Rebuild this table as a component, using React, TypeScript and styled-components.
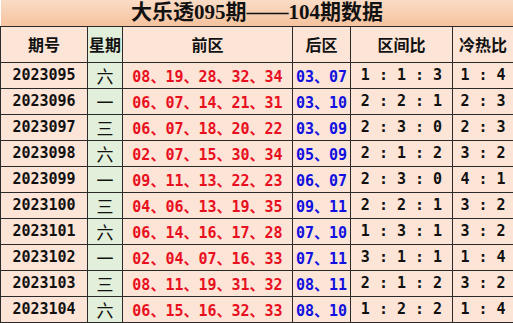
import styled, { createGlobalStyle } from 'styled-components';

const GlobalStyle = createGlobalStyle`
    html, body {
        margin: 0;
        padding: 0;
        background: #ffffff;
    }
`;

type Row = {
    issue: string;
    day: string;
    front: string[];
    back: string[];
    zone: number[];
    heat: number[];
};

const rows: Row[] = [
    { issue: '2023095', day: '六', front: ['08', '19', '28', '32', '34'], back: ['03', '07'], zone: [1, 1, 3], heat: [1, 4] },
    { issue: '2023096', day: '一', front: ['06', '07', '14', '21', '31'], back: ['03', '10'], zone: [2, 2, 1], heat: [2, 3] },
    { issue: '2023097', day: '三', front: ['06', '07', '18', '20', '22'], back: ['03', '09'], zone: [2, 3, 0], heat: [2, 3] },
    { issue: '2023098', day: '六', front: ['02', '07', '15', '30', '34'], back: ['05', '09'], zone: [2, 1, 2], heat: [3, 2] },
    { issue: '2023099', day: '一', front: ['09', '11', '13', '22', '23'], back: ['06', '07'], zone: [2, 3, 0], heat: [4, 1] },
    { issue: '2023100', day: '三', front: ['04', '06', '13', '19', '35'], back: ['09', '11'], zone: [2, 2, 1], heat: [3, 2] },
    { issue: '2023101', day: '六', front: ['06', '14', '16', '17', '28'], back: ['07', '10'], zone: [1, 3, 1], heat: [3, 2] },
    { issue: '2023102', day: '一', front: ['02', '04', '07', '16', '33'], back: ['07', '11'], zone: [3, 1, 1], heat: [1, 4] },
    { issue: '2023103', day: '三', front: ['08', '11', '19', '31', '32'], back: ['08', '11'], zone: [2, 1, 2], heat: [3, 2] },
    { issue: '2023104', day: '六', front: ['06', '15', '16', '32', '33'], back: ['08', '10'], zone: [1, 2, 2], heat: [1, 4] }
];

const colWidths = [87, 35, 170, 58, 102, 61];

const App = (): JSX.Element => {
    return (
        <>
            <GlobalStyle />
            <Sheet>
                <colgroup>
                    {colWidths.map((w, i) => (
                        <col key={i} style={{ width: w }} />
                    ))}
                </colgroup>
                <thead>
                    <TitleRow>
                        <TitleCell colSpan={6}>大乐透095期——104期数据</TitleCell>
                    </TitleRow>
                    <HeadRow>
                        <HeadCell>期号</HeadCell>
                        <HeadCell $green>星期</HeadCell>
                        <HeadCell>前区</HeadCell>
                        <HeadCell>后区</HeadCell>
                        <HeadCell>区间比</HeadCell>
                        <HeadCell>冷热比</HeadCell>
                    </HeadRow>
                </thead>
                <tbody>
                    {rows.map((r) => (
                        <DataRow key={r.issue}>
                            <NumCell>{r.issue}</NumCell>
                            <DayCell>{r.day}</DayCell>
                            <NumCell $color="#e8101e">{r.front.join('、')}</NumCell>
                            <NumCell $color="#1010e0">{r.back.join('、')}</NumCell>
                            <NumCell>{r.zone.join(' : ')}</NumCell>
                            <NumCell>{r.heat.join(' : ')}</NumCell>
                        </DataRow>
                    ))}
                </tbody>
            </Sheet>
        </>
    );
};

export default App;

const Sheet = styled.table`
    width: 513px;
    table-layout: fixed;
    border-collapse: collapse;
    border-spacing: 0;
`;

const TitleRow = styled.tr`
    height: 26px;
`;

const TitleCell = styled.th`
    padding: 0;
    border-bottom: 1px solid #2a2a2a;
    background: linear-gradient(to bottom, #fadcc6, #f5c29d);
    font-family: 'Liberation Serif', 'Noto Sans CJK SC', serif;
    font-size: 21px;
    font-weight: 700;
    line-height: 25px;
    color: #111;
    text-align: center;
`;

const HeadRow = styled.tr`
    height: 36px;
`;

const HeadCell = styled.th<{ $green?: boolean }>`
    padding: 0;
    border: 1px solid #2a2a2a;
    background: ${(p) => (p.$green ? '#e2efda' : '#fce4d6')};
    font-family: 'Noto Sans CJK SC', sans-serif;
    font-size: 16px;
    font-weight: 700;
    color: #111;
    text-align: center;
    white-space: nowrap;
`;

const DataRow = styled.tr`
    height: 26px;
`;

const NumCell = styled.td<{ $color?: string }>`
    padding: 0;
    border: 1px solid #2a2a2a;
    background: #fce4d6;
    font-family: 'DejaVu Sans Mono', 'Noto Sans CJK SC', monospace;
    font-size: 15px;
    font-weight: 700;
    color: ${(p) => p.$color || '#111'};
    text-align: center;
    white-space: nowrap;
`;

const DayCell = styled.td`
    padding: 0;
    border: 1px solid #2a2a2a;
    background: #e2efda;
    font-family: 'Noto Sans CJK SC', sans-serif;
    font-size: 17px;
    font-weight: 400;
    color: #111;
    text-align: center;
`;
